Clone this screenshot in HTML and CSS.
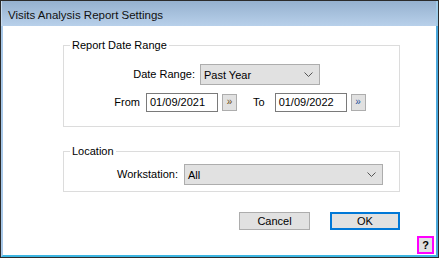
FILE: index.html
```html
<!DOCTYPE html>
<html>
<head>
<meta charset="utf-8">
<link rel="stylesheet" href="styles.css">
</head>
<body>
<div class="window">
  <div class="titlebar">Visits Analysis Report Settings</div>
  <div class="client">
    <fieldset class="group group-date">
      <legend>Report Date Range</legend>
      <div class="row row-range">
        <span class="label label-range">Date Range:</span>
        <div class="select select-range"><span>Past Year</span>
          <svg class="chev" width="9" height="5" viewBox="0 0 9 5"><path d="M0.5 0.5 L4.5 4.5 L8.5 0.5" fill="none" stroke="#555" stroke-width="1"/></svg>
        </div>
      </div>
      <div class="row row-dates">
        <span class="label label-from">From</span>
        <div class="input">01/09/2021</div>
        <div class="pick pick-from">»</div>
        <span class="label label-to">To</span>
        <div class="input">01/09/2022</div>
        <div class="pick pick-to">»</div>
      </div>
    </fieldset>
    <fieldset class="group group-loc">
      <legend>Location</legend>
      <div class="row row-ws">
        <span class="label label-ws">Workstation:</span>
        <div class="select select-ws"><span>All</span>
          <svg class="chev" width="9" height="5" viewBox="0 0 9 5"><path d="M0.5 0.5 L4.5 4.5 L8.5 0.5" fill="none" stroke="#555" stroke-width="1"/></svg>
        </div>
      </div>
    </fieldset>
    <div class="buttons">
      <div class="btn">Cancel</div>
      <div class="btn btn-default">OK</div>
    </div>
    <div class="helprow">
      <div class="help">?</div>
    </div>
  </div>
</div>
</body>
</html>
```
FILE: styles.css
```css
html, body {
  margin: 0;
  padding: 0;
  background: #ffffff;
}
body {
  width: 439px;
  height: 258px;
  overflow: hidden;
  font-family: "Liberation Sans", Arial, sans-serif;
  font-size: 11px;
  color: #000;
}
.window {
  width: 439px;
  height: 258px;
  box-sizing: border-box;
  border: 1px solid #2b2b2b;
  display: flex;
  flex-direction: column;
  background: #fff;
}
.titlebar {
  height: 25px;
  flex: none;
  box-sizing: border-box;
  padding-left: 6px;
  padding-top: 7px;
  font-size: 11.5px;
  line-height: 14px;
  color: #111;
  background: linear-gradient(#95b1cf, #b8d0ea);
  border-left: 1px solid #c7dbef;
  border-right: 2px solid #9fcbe8;
}
.client {
  flex: 1;
  display: flex;
  flex-direction: column;
  padding-left: 60px;
  border-left: 2px solid #a8c8e8;
  border-right: 2px solid #4aa8dc;
  border-bottom: 2px solid #3db6e2;
  background: #fff;
}
.group {
  width: 337px;
  box-sizing: border-box;
  margin: 0;
  padding: 0;
  border: 1px solid #dcdcdc;
  min-width: 0;
}
.group legend {
  margin-left: 6px;
  padding: 0 2px;
  font-size: 11px;
  line-height: 13px;
}
.group-date {
  margin-top: 13px;
  height: 88px;
}
.group-loc {
  margin-top: 18px;
  height: 47px;
}
.row {
  display: flex;
  align-items: center;
}
.label {
  text-align: right;
  line-height: 13px;
}
.row-range {
  margin-top: 12px;
  height: 21px;
}
.label-range {
  width: 131px;
  margin-right: 5px;
}
.select {
  box-sizing: border-box;
  height: 21px;
  background: #e1e1e1;
  border: 1px solid #adadad;
  display: flex;
  align-items: center;
  justify-content: space-between;
  padding-left: 3px;
  padding-right: 6px;
}
.select-range {
  width: 120px;
}
.chev {
  display: block;
}
.row-dates {
  margin-top: 8px;
  height: 19px;
}
.label-from {
  width: 76px;
  margin-right: 6px;
}
.input {
  box-sizing: border-box;
  width: 72px;
  height: 19px;
  border: 1px solid #7a7a7a;
  background: #fff;
  padding-left: 3px;
  line-height: 17px;
}
.pick {
  box-sizing: border-box;
  width: 15px;
  height: 17px;
  margin-left: 4px;
  background: #e1e1e1;
  border: 1px solid #adadad;
  font-size: 10px;
  line-height: 14px;
  text-align: center;
  color: #333;
}
.pick-from {
  color: #6b4a12;
}
.pick-to {
  color: #1f4f9a;
}
.label-to {
  margin-left: 16px;
  margin-right: 10px;
}
.row-ws {
  margin-top: 6px;
  height: 21px;
}
.label-ws {
  width: 114px;
  margin-right: 6px;
}
.select-ws {
  width: 199px;
}
.buttons {
  width: 337px;
  display: flex;
  justify-content: flex-end;
  gap: 20px;
  margin-top: 20px;
}
.btn {
  box-sizing: border-box;
  width: 71px;
  height: 18px;
  background: #e1e1e1;
  border: 1px solid #adadad;
  text-align: center;
  line-height: 16px;
}
.btn-default {
  width: 70px;
  border: 2px solid #0078d7;
  line-height: 14px;
}
.helprow {
  display: flex;
  justify-content: flex-end;
  margin-top: auto;
  padding-right: 2px;
  padding-bottom: 1px;
}
.help {
  box-sizing: border-box;
  width: 17px;
  height: 18px;
  background: #e1e1e1;
  border: 2px solid #ff00ff;
  text-align: center;
  font-weight: bold;
  font-size: 11px;
  line-height: 14px;
}
```
